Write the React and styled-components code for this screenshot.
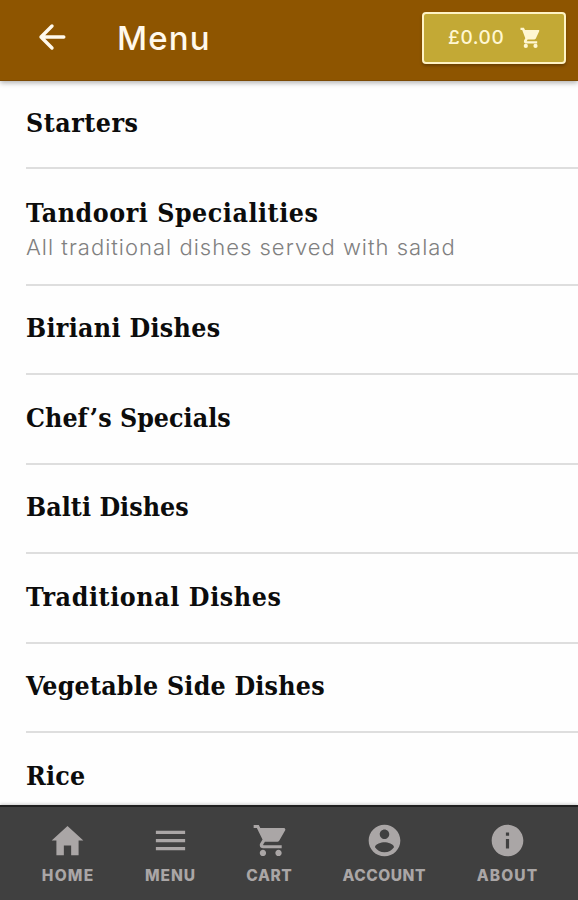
import React from "react";
import styled, { createGlobalStyle } from "styled-components";
import {
  IoMdCart,
  IoMdContact,
  IoMdHome,
  IoMdInformationCircle,
  IoMdMenu,
} from "react-icons/io";

const GlobalStyle = createGlobalStyle`
  * { box-sizing: border-box; }
  body { margin: 0; background: #fefefe; font-family: Inter, sans-serif; }
`;

const Screen = styled.div`
  width: 578px;
  height: 900px;
  display: flex;
  flex-direction: column;
  overflow: hidden;
  background: #fefefe;
`;

const Header = styled.header`
  flex: none;
  height: 81px;
  display: flex;
  align-items: center;
  padding: 0 12px 4px 38px;
  background: #8e5500;
  border-bottom: 1px solid #7c4a05;
  box-shadow: 0 2px 5px rgba(0, 0, 0, 0.3);
  z-index: 1;
`;

const BackButton = styled.button`
  display: flex;
  margin-bottom: 3px;
  padding: 0;
  border: 0;
  background: none;
  color: #fff9ec;
`;

const Title = styled.h1`
  flex: 1;
  margin: 0 0 0 51px;
  color: #fff9ec;
  font-size: 33px;
  font-weight: 500;
  line-height: 40px;
  letter-spacing: 1.1px;
`;

const CartButton = styled.button`
  width: 144px;
  height: 52px;
  display: flex;
  align-items: center;
  padding: 0 0 1px 24px;
  gap: 16px;
  border: 2px solid #fff3c4;
  border-radius: 4px;
  background: #c3a935;
  box-shadow: 0 2px 3px rgba(0, 0, 0, 0.25);
  color: #fff7d2;
  font: 500 19px Inter, sans-serif;
  letter-spacing: 0.6px;
`;

const CategoryList = styled.ul`
  flex: 1;
  min-height: 0;
  overflow: hidden;
  margin: 0;
  padding: 0 0 0 26px;
  list-style: none;
`;

const Category = styled.li`
  height: ${(p) => p.$height}px;
  padding-top: ${(p) => p.$top}px;
  border-bottom: 2px solid #dedede;
  white-space: nowrap;
`;

const CategoryName = styled.h2`
  margin: 0;
  color: #0c0c0c;
  font-family: "DejaVu Serif Condensed", "DejaVu Serif", serif;
  font-stretch: condensed;
  font-size: 26.5px;
  font-weight: 700;
  line-height: 36px;
  letter-spacing: ${(p) => p.$spacing}px;
`;

const CategoryNote = styled.p`
  margin: 0;
  color: #808080;
  font-size: 22px;
  font-weight: 300;
  line-height: 32px;
  letter-spacing: 1.01px;
`;

const TabBar = styled.nav`
  flex: none;
  height: 95px;
  display: flex;
  justify-content: center;
  gap: 51px;
  padding: 13.5px 0 0 1px;
  background: #404040;
  border-top: 2px solid #202020;
  box-shadow: 0 -1px 3px rgba(0, 0, 0, 0.2);
`;

const Tab = styled.a`
  width: ${(p) => p.$width}px;
  display: flex;
  flex-direction: column;
  align-items: center;
  color: #aaa6a6;

  svg { flex: none; font-size: 39px; }
`;

const TabLabel = styled.span`
  margin-top: 6px;
  padding-left: ${(p) => p.$spacing}px;
  font-size: 15.5px;
  font-weight: 800;
  line-height: 20px;
  letter-spacing: ${(p) => p.$spacing}px;
`;

const BackArrow = () => (
  <svg width="28" height="28" viewBox="0 0 28 28" fill="none" stroke="currentColor" strokeWidth="3.4" strokeLinejoin="round" strokeLinecap="round">
    <path d="M25.8 14H3M14 3L3 14l11 11" />
  </svg>
);

const SmallCart = () => (
  <svg width="20" height="22" viewBox="0 0 20 22" fill="currentColor">
    <path d="M.5.8h3.4L5 3h14.2v1.2l-3.5 7.6-1.3.8H7.6l-.9 1.6h10.5v2.2H5.2q-2-.8-1.2-2.8l1.3-2.4L2.2 3H.5z" />
    <circle cx="5.8" cy="18.9" r="2.1" />
    <circle cx="15.5" cy="18.9" r="2.1" />
  </svg>
);

const categories = [
  { name: "Starters", height: 88.2, top: 24, spacing: 0.5 },
  { name: "Tandoori Specialities", note: "All traditional dishes served with salad", height: 117.3, top: 26, spacing: 0.53 },
  { name: "Biriani Dishes", height: 88.9, top: 24, spacing: 0.31 },
  { name: "Chef’s Specials", height: 89.5, top: 24.8, spacing: 0.03 },
  { name: "Balti Dishes", height: 89.5, top: 24.5, spacing: 0.06 },
  { name: "Traditional Dishes", height: 89.5, top: 24.8, spacing: 0.6 },
  { name: "Vegetable Side Dishes", height: 89.5, top: 24.5, spacing: 0.22 },
  { name: "Rice", height: 89.5, top: 24.8, spacing: 0.2 },
];

const tabs = [
  { label: "HOME", icon: IoMdHome, width: 52, spacing: 1.2 },
  { label: "MENU", icon: IoMdMenu, width: 51, spacing: 1 },
  { label: "CART", icon: IoMdCart, width: 45, spacing: 0.6 },
  { label: "ACCOUNT", icon: IoMdContact, width: 83, spacing: 0.5 },
  { label: "ABOUT", icon: IoMdInformationCircle, width: 61, spacing: 1.1 },
];

export default function App() {
  return (
    <Screen>
      <GlobalStyle />
      <Header>
        <BackButton aria-label="Back"><BackArrow /></BackButton>
        <Title>Menu</Title>
        <CartButton><span>£0.00</span><SmallCart /></CartButton>
      </Header>
      <CategoryList>
        {categories.map((c) => (
          <Category key={c.name} $height={c.height} $top={c.top}>
            <CategoryName $spacing={c.spacing}>{c.name}</CategoryName>
            {c.note && <CategoryNote>{c.note}</CategoryNote>}
          </Category>
        ))}
      </CategoryList>
      <TabBar>
        {tabs.map(({ label, icon: Icon, width, spacing }) => (
          <Tab key={label} $width={width}>
            <Icon />
            <TabLabel $spacing={spacing}>{label}</TabLabel>
          </Tab>
        ))}
      </TabBar>
    </Screen>
  );
}
